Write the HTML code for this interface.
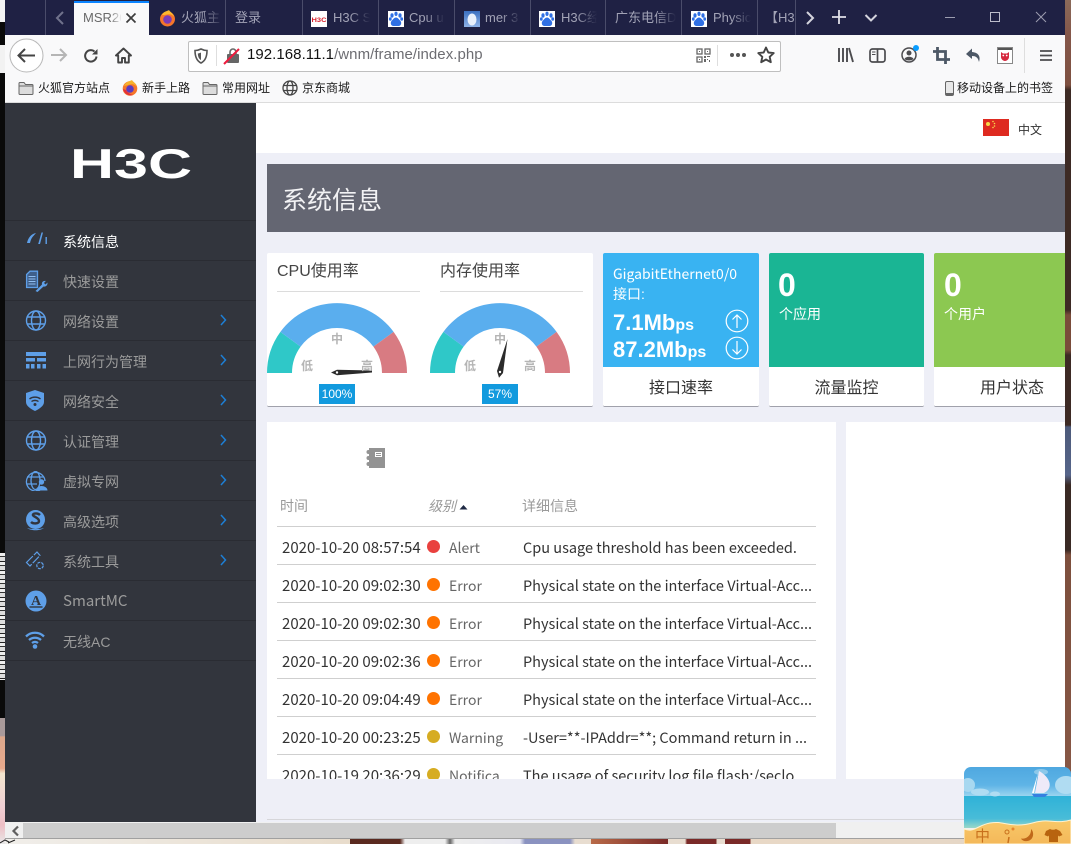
<!DOCTYPE html>
<html><head><meta charset="utf-8"><style>
html,body{margin:0;padding:0;width:1071px;height:844px;overflow:hidden;background:#e8ddd0}
body{position:relative;font-family:"Liberation Sans","Noto Sans CJK SC",sans-serif}
.a{position:absolute}
.t{position:absolute;white-space:nowrap;line-height:20px}
.tab{position:absolute;top:0;height:35px;width:1px;background:#4a4c6a}
.tt{position:absolute;top:8px;white-space:nowrap;line-height:20px;font-size:13px;color:#a2a3b6;overflow:hidden}
.fade{position:absolute;top:2px;height:33px;background:linear-gradient(90deg,rgba(31,33,68,0),#1f2144 20px)}
.bm{position:absolute;top:78px;font-size:12px;color:#1a1a1a;line-height:20px;white-space:nowrap}
.nl{position:absolute;left:5px;width:251px;height:1px;background:#2a2c33}
.n{position:absolute;left:63px;font-size:14px;color:#9b9b9b;line-height:20px;white-space:nowrap}
.ic{position:absolute;left:25px}
.rl{position:absolute;left:10px;width:539px;height:1px;background:#cfcfcf}
.d{position:absolute;left:160px;width:13px;height:13px;border-radius:50%}
.c1,.c2,.c3{position:absolute;white-space:nowrap;line-height:20px;font-size:15px;font-family:"Noto Sans CJK SC","Liberation Sans",sans-serif}
.c1{left:15px;color:#333}
.c2{left:182px;color:#666;font-size:14px}
.c3{left:256px;color:#333;font-size:14.5px}
</style></head><body>

<!-- background strips -->
<div class="a" style="left:0;top:0;width:5px;height:22px;background:#f4f4f4"></div>
<div class="a" style="left:0;top:22px;width:5px;height:23px;background:#0a0a0a"></div>
<div class="a" style="left:0;top:45px;width:5px;height:28px;background:#f2f2f2"></div>
<div class="a" style="left:0;top:73px;width:5px;height:607px;background:#0a0a0a"></div>
<div class="a" style="left:0;top:553px;width:5px;height:127px;background:repeating-linear-gradient(180deg,#eee 0 3px,#333 3px 4px,#ddd 4px 8px,#222 8px 9px)"></div>
<div class="a" style="left:0;top:680px;width:5px;height:38px;background:#0a0a0a"></div>
<div class="a" style="left:0;top:718px;width:5px;height:126px;background:linear-gradient(180deg,#a99a9a 0,#a99a9a 14%,#dca88c 15%,#e8a98c 40%,#f3e6cf 44%,#f0d0d4 70%,#eebfc5 85%,#e8e8e8 100%)"></div>
<div class="a" style="left:1065px;top:0;width:6px;height:844px;background:linear-gradient(180deg,#8a6a5a 0,#85574a 35px,#7d5040 85px,#3d2a24 90px,#3d2a24 310px,#7a4c3a 315px,#7a4c3a 350px,#3d2a24 355px,#3d2a24 425px,#4d5a7a 427px,#56658a 475px,#3a2a24 485px,#3a2a24 550px,#7d4f3d 555px,#8a5a48 844px)"></div>
<!-- bottom wallpaper -->
<div class="a" style="left:5px;top:838px;width:1060px;height:6px;background:linear-gradient(90deg,#f0eeea 0,#e8dccb 345px,#5a2a20 345px,#5a2a20 395px,#eee 400px,#eee 440px,#666 445px,#eee 450px,#e8e8f0 515px,#8a92c0 520px,#8a92c0 565px,#e8ddd0 570px,#e8ddd0 586px,#b86a48 586px,#7a2a28 663px,#e8ddd0 663px,#e8ddd0 680px,#7a2a28 682px,#7a2a28 711px,#e8ddd0 712px,#e8ddd0 720px,#7a2a28 720px,#7a2a28 745px,#e8d8c6 746px,#e4d6c6 100%)"></div>
<div class="a" style="left:5px;top:838px;width:1060px;height:1px;background:#a0a0a0"></div>
<svg class="a" style="left:0;top:838px" width="25" height="6"><path d="M0 5l5-3 4 2M8 5l7-3" stroke="#222" stroke-width="1" fill="none"/></svg>

<!-- tab bar -->
<div class="a" style="left:5px;top:0;width:1060px;height:35px;background:#1f2144"></div>
<div class="tab" style="left:45px"></div>
<div class="tab" style="left:225px"></div>
<div class="tab" style="left:302px"></div>
<div class="tab" style="left:378px"></div>
<div class="tab" style="left:454px"></div>
<div class="tab" style="left:530px"></div>
<div class="tab" style="left:605px"></div>
<div class="tab" style="left:681px"></div>
<div class="tab" style="left:757px"></div>
<div class="tab" style="left:795px"></div>
<svg class="a" style="left:53px;top:10px" width="14" height="16"><path d="M10 2L4 8l6 6" fill="none" stroke="#70728c" stroke-width="2"/></svg>
<div class="a" style="left:74px;top:1px;width:75px;height:34px;background:#f9f9fa"></div>
<div class="a" style="left:74px;top:1px;width:75px;height:2px;background:#0a84ff"></div>
<div class="tt" style="left:83px;color:#6a6a6a;width:38px">MSR26</div>
<div class="a" style="left:110px;top:3px;width:12px;height:32px;background:linear-gradient(90deg,rgba(249,249,250,0),#f9f9fa)"></div>
<svg class="a" style="left:125px;top:12px" width="12" height="12"><path d="M1.500 1.500l9 9M10.500 1.500l-9 9" stroke="#3c3c3c" stroke-width="1.700"/></svg>

<svg class="a" style="left:159px;top:10px" width="17" height="17"><circle cx="8.500" cy="9" r="7.500" fill="#f5762a"/><circle cx="8.500" cy="9.500" r="4.300" fill="#7a3bb8"/><path d="M3 5C5 1 9 1 10 0c1 2 4 3 5 7-2-3-5-3-7-2.500C6 5 4 5 3 5z" fill="#fcb82e"/></svg>
<div class="tt" style="left:181px">火狐主</div><div class="fade" style="left:203px;width:22px"></div>
<div class="tt" style="left:235px">登录</div>
<svg class="a" style="left:311px;top:11px" width="16" height="16"><rect width="16" height="16" fill="#fff"/><text x="8" y="11" font-size="6.500" font-weight="700" fill="#d8202c" text-anchor="middle" font-family="Liberation Sans" textLength="15" lengthAdjust="spacingAndGlyphs">H3C</text></svg>
<div class="tt" style="left:333px">H3C S</div><div class="fade" style="left:350px;width:28px"></div>
<svg class="a" style="left:388px;top:11px" width="16" height="16"><rect width="16" height="16" fill="#fff"/><g fill="#2f6fe4"><ellipse cx="4" cy="4.500" rx="1.600" ry="2.200"/><ellipse cx="8" cy="2.800" rx="1.600" ry="2.200"/><ellipse cx="12" cy="4.500" rx="1.600" ry="2.200"/><ellipse cx="2.300" cy="8" rx="1.400" ry="1.800"/><ellipse cx="13.700" cy="8" rx="1.400" ry="1.800"/><path d="M8 6.500c2 0 3 2 4.500 3.500 1.500 2 .5 5-2 5H5.500c-2.500 0-3.500-3-2-5C5 8.500 6 6.500 8 6.500z"/></g></svg>
<div class="tt" style="left:409px">Cpu u</div><div class="fade" style="left:425px;width:29px"></div>
<svg class="a" style="left:464px;top:11px" width="16" height="16"><defs><linearGradient id="mg" x1="0" y1="0" x2="0" y2="1"><stop offset="0" stop-color="#3a6fc0"/><stop offset="1" stop-color="#8fb3e8"/></linearGradient></defs><rect width="16" height="16" fill="url(#mg)"/><ellipse cx="8" cy="8.500" rx="4.500" ry="6" fill="#e9f0fb"/></svg>
<div class="tt" style="left:485px">mer 3</div><div class="fade" style="left:501px;width:29px"></div>
<svg class="a" style="left:539px;top:11px" width="16" height="16"><rect width="16" height="16" fill="#fff"/><g fill="#2f6fe4"><ellipse cx="4" cy="4.500" rx="1.600" ry="2.200"/><ellipse cx="8" cy="2.800" rx="1.600" ry="2.200"/><ellipse cx="12" cy="4.500" rx="1.600" ry="2.200"/><ellipse cx="2.300" cy="8" rx="1.400" ry="1.800"/><ellipse cx="13.700" cy="8" rx="1.400" ry="1.800"/><path d="M8 6.500c2 0 3 2 4.500 3.500 1.500 2 .5 5-2 5H5.500c-2.500 0-3.500-3-2-5C5 8.500 6 6.500 8 6.500z"/></g></svg>
<div class="tt" style="left:561px">H3C经</div><div class="fade" style="left:577px;width:28px"></div>
<div class="tt" style="left:615px">广东电信D</div><div class="fade" style="left:656px;width:25px"></div>
<svg class="a" style="left:691px;top:11px" width="16" height="16"><rect width="16" height="16" fill="#fff"/><g fill="#2f6fe4"><ellipse cx="4" cy="4.500" rx="1.600" ry="2.200"/><ellipse cx="8" cy="2.800" rx="1.600" ry="2.200"/><ellipse cx="12" cy="4.500" rx="1.600" ry="2.200"/><ellipse cx="2.300" cy="8" rx="1.400" ry="1.800"/><ellipse cx="13.700" cy="8" rx="1.400" ry="1.800"/><path d="M8 6.500c2 0 3 2 4.500 3.500 1.500 2 .5 5-2 5H5.500c-2.500 0-3.500-3-2-5C5 8.500 6 6.500 8 6.500z"/></g></svg>
<div class="tt" style="left:713px">Physic</div><div class="fade" style="left:731px;width:26px"></div>
<div class="tt" style="left:765px;width:30px">【H3</div>
<svg class="a" style="left:803px;top:10px" width="14" height="16"><path d="M4 2l6 6-6 6" fill="none" stroke="#d4d4dd" stroke-width="2"/></svg>
<svg class="a" style="left:831px;top:9px" width="16" height="16"><path d="M8 1v14M1 8h14" stroke="#e0e0e8" stroke-width="1.800"/></svg>
<svg class="a" style="left:864px;top:11px" width="14" height="14"><path d="M1.500 4l5.500 5.500L12.500 4" fill="none" stroke="#d4d4dd" stroke-width="2"/></svg>
<svg class="a" style="left:944px;top:11px" width="12" height="12"><path d="M1 6.500h10" stroke="#9c9db0"/></svg>
<svg class="a" style="left:989px;top:11px" width="12" height="12"><rect x="1.500" y="1.500" width="9" height="9" fill="none" stroke="#bcbdcb"/></svg>
<svg class="a" style="left:1035px;top:11px" width="12" height="12"><path d="M1 1l10 10M11 1L1 11" stroke="#9c9db0"/></svg>

<!-- toolbar -->
<div class="a" style="left:5px;top:35px;width:1060px;height:68px;background:#f9f9fa"></div>
<div class="a" style="left:5px;top:102px;width:1060px;height:1px;background:#dcdcdc"></div>
<svg class="a" style="left:9px;top:38px" width="35" height="35"><circle cx="17.500" cy="17.500" r="16.500" fill="#fff" stroke="#b8b8b8"/><path d="M26 17.500H10M16 11l-6.500 6.500L16 24" fill="none" stroke="#444" stroke-width="2"/></svg>
<svg class="a" style="left:50px;top:46px" width="18" height="18"><path d="M1 9h15M10 3l6 6-6 6" fill="none" stroke="#b5b5b5" stroke-width="2"/></svg>
<svg class="a" style="left:83px;top:48px" width="16" height="16"><path d="M13.500 8.500A5.700 5.700 0 1 1 11.500 3.500" fill="none" stroke="#444" stroke-width="2"/><path d="M14.500 1v5.500H9z" fill="#444"/></svg>
<svg class="a" style="left:115px;top:47px" width="17" height="17"><path d="M8.500 1.500L1 8.500h2.200V15.500h3.800v-4.500h3v4.500h3.800V8.500H16z" fill="none" stroke="#444" stroke-width="1.900" stroke-linejoin="round"/></svg>
<div class="a" style="left:187.500px;top:40.500px;width:591px;height:29px;background:#fff;border:1px solid #bfbfbf;border-radius:2px"></div>
<svg class="a" style="left:194px;top:48px" width="14" height="16"><path d="M7 1c2 1 4 1.500 6 1.500C13 9 11 13 7 15 3 13 1 9 1 2.500 3 2.500 5 2 7 1z" fill="none" stroke="#555" stroke-width="1.600"/><path d="M7 4.500v7.500C5 11 4 9 3.800 5.500 5 5.300 6 5 7 4.500z" fill="#555"/></svg>
<div class="a" style="left:216px;top:45px;width:1px;height:21px;background:#dedede"></div>
<svg class="a" style="left:223px;top:47px" width="18" height="18"><rect x="4" y="7" width="12" height="9" rx="1" fill="#666"/><path d="M7 7V5a3 3 0 0 1 6 0v2" fill="none" stroke="#666" stroke-width="1.600"/><path d="M1 17L16 2" stroke="#ee1c3e" stroke-width="2"/></svg>
<div class="t" style="left:247px;top:44.500px;font-size:15px;color:#6d6d72;letter-spacing:.05px"><span style="color:#111">192.168.11.1</span>/wnm/frame/index.php</div>
<svg class="a" style="left:696px;top:48px" width="15" height="15"><g fill="none" stroke="#666" stroke-width="1.300"><rect x="1" y="1" width="5" height="5"/><rect x="9" y="1" width="5" height="5"/><rect x="1" y="9" width="5" height="5"/></g><path d="M3 3h1v1H3zM11 3h1v1h-1zM3 11h1v1H3zM8 8h2v2H8zM11 8h3v1h-3zM8 11h2v3H8zM11 11h1v1h-1zM13 12h1v2h-1z" fill="#666"/></svg>
<div class="a" style="left:717px;top:45px;width:1px;height:21px;background:#dedede"></div>
<svg class="a" style="left:729px;top:52px" width="18" height="6"><g fill="#555"><circle cx="3" cy="3" r="2"/><circle cx="9" cy="3" r="2"/><circle cx="15" cy="3" r="2"/></g></svg>
<svg class="a" style="left:757px;top:46px" width="18" height="18"><path d="M9 1.500l2.300 5 5.400.600-4 3.700 1.100 5.400L9 13.500l-4.800 2.700 1.100-5.400-4-3.700 5.400-.600z" fill="none" stroke="#444" stroke-width="1.900" stroke-linejoin="round"/></svg>
<svg class="a" style="left:837px;top:47px" width="17" height="16"><path d="M2 1v14M6 1v14M10 1v14M12 1l4 14" stroke="#4c4c4f" stroke-width="1.900" fill="none"/></svg>
<svg class="a" style="left:869px;top:48px" width="17" height="15"><rect x="1" y="1" width="15" height="13" rx="2.500" fill="none" stroke="#4c4c4f" stroke-width="1.700"/><path d="M8.500 1v13" stroke="#4c4c4f" stroke-width="1.700"/><path d="M3 4h3.500M3 6.500h3.500" stroke="#4c4c4f"/></svg>
<svg class="a" style="left:900px;top:44px" width="20" height="20"><circle cx="9" cy="11" r="7" fill="none" stroke="#4c4c4f" stroke-width="1.500"/><circle cx="9" cy="9" r="2.500" fill="#4c4c4f"/><path d="M4.500 15c1-3 8-3 9 0-2 2-7 2-9 0z" fill="#4c4c4f"/><circle cx="16" cy="4" r="3" fill="#0a9dff"/></svg>
<svg class="a" style="left:933px;top:47px" width="17" height="17"><path d="M4.500 0v12.500H17M0 4.500h12.500V17" fill="none" stroke="#4d5866" stroke-width="2.800"/></svg>
<svg class="a" style="left:965px;top:47px" width="17" height="17"><path d="M7 1.500L1 7l6 5V9c4 0 6 1.500 7 6 2-6-1-9.500-7-10z" fill="#4d5866"/></svg>
<svg class="a" style="left:997px;top:47px" width="16" height="17"><rect x=".5" y=".5" width="15" height="16" fill="#fff" stroke="#888"/><rect x="1" y="1" width="14" height="2" fill="#555"/><path d="M4 5l2 1.500h4L12 5v5c0 2-2 4-4 4s-4-2-4-4z" fill="#d6283e"/><circle cx="6.300" cy="8.500" r=".9" fill="#fff"/><circle cx="9.700" cy="8.500" r=".9" fill="#fff"/></svg>
<div class="a" style="left:1024px;top:38px;width:1px;height:35px;background:#dedede"></div>
<svg class="a" style="left:1039px;top:49px" width="14" height="13"><path d="M1 2h12M1 6.500h12M1 11h12" stroke="#4c4c4f" stroke-width="1.800"/></svg>

<!-- bookmarks -->
<svg class="a" style="left:18px;top:81px" width="16" height="14"><path d="M1 12.500V2.500c0-.7.400-1 1-1h4l1.500 2H14c.7 0 1 .4 1 1v8c0 .7-.3 1-1 1H2c-.6 0-1-.3-1-1z" fill="#dcdcdc" stroke="#666"/><path d="M1 5h14" stroke="#666"/></svg>
<div class="bm" style="left:38px">火狐官方站点</div>
<svg class="a" style="left:122px;top:80px" width="16" height="16"><circle cx="8" cy="8.500" r="7.300" fill="#f5762a"/><circle cx="8" cy="9" r="3.800" fill="#5b3bc0"/><path d="M2 6C4 1 9 1 10 0c1 2 4 3 5 7-2-3-5-3-7-2.500z" fill="#f7b22b"/><path d="M1 9c1 5 6 7 10 6-4-1-6-3-7-5z" fill="#e3303a"/></svg>
<div class="bm" style="left:142px">新手上路</div>
<svg class="a" style="left:202px;top:81px" width="16" height="14"><path d="M1 12.500V2.500c0-.7.400-1 1-1h4l1.500 2H14c.7 0 1 .4 1 1v8c0 .7-.3 1-1 1H2c-.6 0-1-.3-1-1z" fill="#dcdcdc" stroke="#666"/><path d="M1 5h14" stroke="#666"/></svg>
<div class="bm" style="left:222px">常用网址</div>
<svg class="a" style="left:282px;top:80px" width="16" height="16"><g fill="none" stroke="#444" stroke-width="1.300"><circle cx="8" cy="8" r="7"/><ellipse cx="8" cy="8" rx="3" ry="7"/><path d="M1.500 5.500h13M1.500 10.500h13"/></g></svg>
<div class="bm" style="left:302px">京东商城</div>
<svg class="a" style="left:945px;top:81px" width="9" height="15"><rect x=".5" y=".5" width="8" height="14" rx="1.500" fill="#e8e8e8" stroke="#666"/><rect x="1" y="12" width="7" height="2" fill="#666"/></svg>
<div class="bm" style="left:957px">移动设备上的书签</div>

<!-- sidebar -->
<div class="a" style="left:5px;top:103px;width:251px;height:719px;background:#32353d"></div>
<svg class="a" style="left:65px;top:143px" width="132" height="40"><text x="5" y="35" font-family="Liberation Sans" font-weight="700" font-size="42" fill="#fff" textLength="122" lengthAdjust="spacingAndGlyphs">H3C</text></svg>
<div class="nl" style="top:220px"></div><div class="nl" style="top:260px"></div><div class="nl" style="top:300px"></div><div class="nl" style="top:340px"></div><div class="nl" style="top:380px"></div><div class="nl" style="top:420px"></div><div class="nl" style="top:460px"></div><div class="nl" style="top:500px"></div><div class="nl" style="top:540px"></div><div class="nl" style="top:580px"></div><div class="nl" style="top:620px"></div><div class="nl" style="top:660px"></div>
<div class="n" style="top:231.500px;color:#fff">系统信息</div>
<div class="n" style="top:271.500px">快速设置</div>
<div class="n" style="top:311.500px">网络设置</div>
<div class="n" style="top:351.500px">上网行为管理</div>
<div class="n" style="top:391.500px">网络安全</div>
<div class="n" style="top:431.500px">认证管理</div>
<div class="n" style="top:471.500px">虚拟专网</div>
<div class="n" style="top:511.500px">高级选项</div>
<div class="n" style="top:551.500px">系统工具</div>
<div class="n" style="top:591px;font-size:15px;font-family:'Noto Sans CJK SC',sans-serif">SmartMC</div>
<div class="n" style="top:631.500px">无线AC</div>
<!-- chevrons -->
<svg class="a" style="left:219px;top:314px" width="8" height="12"><path d="M2 1l4.500 5L2 11" fill="none" stroke="#1d7fd6" stroke-width="1.500"/></svg>
<svg class="a" style="left:219px;top:354px" width="8" height="12"><path d="M2 1l4.500 5L2 11" fill="none" stroke="#1d7fd6" stroke-width="1.500"/></svg>
<svg class="a" style="left:219px;top:394px" width="8" height="12"><path d="M2 1l4.500 5L2 11" fill="none" stroke="#1d7fd6" stroke-width="1.500"/></svg>
<svg class="a" style="left:219px;top:434px" width="8" height="12"><path d="M2 1l4.500 5L2 11" fill="none" stroke="#1d7fd6" stroke-width="1.500"/></svg>
<svg class="a" style="left:219px;top:474px" width="8" height="12"><path d="M2 1l4.500 5L2 11" fill="none" stroke="#1d7fd6" stroke-width="1.500"/></svg>
<svg class="a" style="left:219px;top:514px" width="8" height="12"><path d="M2 1l4.500 5L2 11" fill="none" stroke="#1d7fd6" stroke-width="1.500"/></svg>
<svg class="a" style="left:219px;top:554px" width="8" height="12"><path d="M2 1l4.500 5L2 11" fill="none" stroke="#1d7fd6" stroke-width="1.500"/></svg>
<!-- side icons -->
<svg class="ic" style="top:230px" width="24" height="16"><g fill="#5e9fe8"><path d="M2 13C3 8 6 4 11 3L7.500 7C6 9 5.500 11 5 13z"/><path d="M16.500 2.500h1.500L15 14h-1.800z"/><rect x="20.500" y="7" width="1.400" height="7"/></g></svg>
<svg class="ic" style="top:270px" width="24" height="22"><path d="M1.600 4.500L5 1.200h7.500V17.500H1.600z" fill="#3f5f8a" stroke="#5e9fe8" stroke-width="1.300"/><path d="M3.500 6.500h7M3.500 9h7M3.500 11.500h7M3.500 14h7" stroke="#8fbdf0" stroke-width="1"/><path d="M10.500 21l6.500-6.500c-.5-2 1-4 3.800-3.500L19 13l1.500 1.500L22.500 12.500c.300 3-2 4.500-4 4L12.500 22z" fill="#5e9fe8"/></svg>
<svg class="ic" style="top:310px" width="22" height="21"><g fill="none" stroke="#5e9fe8" stroke-width="1.400"><circle cx="11" cy="10.500" r="9.500"/><ellipse cx="11" cy="10.500" rx="4.500" ry="9.500"/><path d="M2.500 7h17M2.500 14h17"/></g></svg>
<svg class="ic" style="top:352px" width="22" height="17"><g fill="#5e9fe8"><rect x="1" y="0" width="20" height="4"/><rect x="1" y="6" width="9" height="3.500"/><rect x="12" y="6" width="9" height="3.500"/><rect x="1" y="12" width="3.500" height="4.500"/><rect x="6" y="12" width="3.500" height="4.500"/><rect x="12" y="12" width="3.500" height="4.500"/><rect x="17.500" y="12" width="3.500" height="4.500"/></g></svg>
<svg class="ic" style="top:390px" width="20" height="21"><path d="M1 3l9-3 9 3v9c0 4-5 7-9 9-4-2-9-5-9-9z" fill="#5e9fe8"/><g fill="none" stroke="#32353d" stroke-width="1.400"><path d="M4.500 9c3-2.500 8-2.500 11 0M6.500 11.500c2-1.500 5-1.500 7 0"/></g><circle cx="10" cy="14.500" r="1.500" fill="#32353d"/></svg>
<svg class="ic" style="top:430px" width="22" height="21"><g fill="none" stroke="#5e9fe8" stroke-width="1.400"><circle cx="11" cy="10.500" r="9.500"/><ellipse cx="11" cy="10.500" rx="4.500" ry="9.500"/><path d="M2.500 7h17M2.500 14h17"/></g></svg>
<svg class="ic" style="top:471px" width="23" height="20"><g fill="none" stroke="#5e9fe8" stroke-width="1.300"><path d="M15 19a9.300 9.300 0 1 1 5-9"/><ellipse cx="10.500" cy="9.500" rx="4.500" ry="9"/><path d="M2 6h17M2 13h10"/></g><circle cx="16.500" cy="11" r="2.700" fill="#5e9fe8"/><path d="M11 19.500c0-3 3-4.500 5.500-4.500s6 1.500 6 4.500z" fill="#5e9fe8"/></svg>
<svg class="ic" style="top:510px" width="21" height="21"><circle cx="10.500" cy="9.500" r="9.500" fill="#5e9fe8"/><path d="M15 5c-2-2-6-2-7-.5-1 2 6 3 6 6.500 0 3-6 3-8 1" fill="none" stroke="#32353d" stroke-width="2.400"/><path d="M2 18c4 3 13 3 17 0-5 1.500-12 1.500-17 0z" fill="#5e9fe8"/></svg>
<svg class="ic" style="top:550px" width="20" height="20"><g fill="none" stroke="#5e9fe8" stroke-width="1.200" stroke-dasharray="9 1.500"><path d="M1.500 12.500L12 2l3 3.500L5 16z"/><circle cx="15" cy="15.500" r="3.200" stroke-dasharray="3 1"/></g></svg>
<svg class="ic" style="top:590px" width="22" height="22"><circle cx="11" cy="11" r="10.500" fill="#5e9fe8"/><text x="11" y="15" text-anchor="middle" font-family="Liberation Serif" font-size="14" font-weight="700" fill="#32353d">A</text><path d="M4.500 17h13" stroke="#32353d" stroke-width="1.400"/></svg>
<svg class="ic" style="top:631px" width="20" height="18"><g fill="none" stroke="#5e9fe8" stroke-width="2.300"><path d="M1 5.500c5-5 13-5 18 0M4 9c3.500-3 8.500-3 12 0M7 12c2-1.500 4-1.500 6 0"/></g><circle cx="10" cy="15.500" r="2.300" fill="#5e9fe8"/></svg>

<!-- main -->
<div class="a" style="left:256px;top:103px;width:809px;height:719px;background:#eeeff7"></div>
<div class="a" style="left:256px;top:103px;width:809px;height:50px;background:#fff"></div>
<svg class="a" style="left:983px;top:119px" width="26" height="17"><rect width="26" height="17" fill="#de2a20"/><g fill="#f6d84a"><circle cx="5" cy="5" r="2"/><circle cx="10" cy="2.500" r=".8"/><circle cx="11.500" cy="4.500" r=".8"/><circle cx="11.500" cy="7" r=".8"/><circle cx="10" cy="8.500" r=".8"/></g></svg>
<div class="t" style="left:1018px;top:120px;font-size:12px;color:#333">中文</div>
<div class="a" style="left:267px;top:164px;width:798px;height:68px;background:#646672"></div>
<div class="t" style="left:282px;top:186px;font-size:25px;line-height:30px;color:#f2f2f4">系统信息</div>

<!-- gauge card -->
<div class="a" style="left:267px;top:253px;width:326px;height:153px;background:#fff;border-bottom:1px solid #a0a1ab;border-radius:2px"></div>
<div class="t" style="left:277px;top:262px;font-size:16px;color:#444">CPU使用率</div>
<div class="a" style="left:277px;top:291px;width:143px;height:1px;background:#dcdcdc"></div>
<div class="t" style="left:440px;top:262px;font-size:16px;color:#444">内存使用率</div>
<div class="a" style="left:440px;top:291px;width:143px;height:1px;background:#dcdcdc"></div>

<svg class="a" style="left:262px;top:295px" width="320" height="110">
<path d="M5 78A70 70 0 0 1 18.400 36.900L38.600 51.600A45 45 0 0 0 30 78z" fill="#2fc8c8"/>
<path d="M18.400 36.900A70 70 0 0 1 131.600 36.900L111.400 51.600A45 45 0 0 0 38.600 51.600z" fill="#5aaeee"/>
<path d="M131.600 36.900A70 70 0 0 1 145 78H120A45 45 0 0 0 111.400 51.600z" fill="#d87b82"/>
<g transform="translate(163,0)">
<path d="M5 78A70 70 0 0 1 18.400 36.900L38.600 51.600A45 45 0 0 0 30 78z" fill="#2fc8c8"/>
<path d="M18.400 36.900A70 70 0 0 1 131.600 36.900L111.400 51.600A45 45 0 0 0 38.600 51.600z" fill="#5aaeee"/>
<path d="M131.600 36.900A70 70 0 0 1 145 78H120A45 45 0 0 0 111.400 51.600z" fill="#d87b82"/>
</g>
<path d="M69 77.500L75 74.800L110 75.500V77.500L75 80.300z" fill="#2b2b2b"/><circle cx="75" cy="77.500" r="1.200" fill="#fff"/>
<path d="M245.500 44L241 78L237 82.700L235 76z" fill="#2b2b2b"/><circle cx="238" cy="77" r="1.200" fill="#fff"/>
</svg>
<div class="t" style="left:331px;top:329px;font-size:12px;color:#b5b5b5;font-weight:700">中</div>
<div class="t" style="left:301px;top:356px;font-size:12px;color:#b5b5b5;font-weight:700">低</div>
<div class="t" style="left:361px;top:356px;font-size:12px;color:#b5b5b5;font-weight:700">高</div>
<div class="t" style="left:494px;top:329px;font-size:12px;color:#b5b5b5;font-weight:700">中</div>
<div class="t" style="left:464px;top:356px;font-size:12px;color:#b5b5b5;font-weight:700">低</div>
<div class="t" style="left:524px;top:356px;font-size:12px;color:#b5b5b5;font-weight:700">高</div>
<div class="t" style="left:319px;top:384px;width:36px;text-align:center;background:#129ade;color:#fff;font-size:12px">100%</div>
<div class="t" style="left:482px;top:384px;width:36px;text-align:center;background:#129ade;color:#fff;font-size:12px">57%</div>

<!-- stat cards -->
<div class="a" style="left:603px;top:253px;width:156px;height:153px;background:#fff;border-bottom:1px solid #a0a1ab;border-radius:2px"></div>
<div class="a" style="left:603px;top:253px;width:156px;height:114px;background:#39b3f2;border-radius:2px 2px 0 0"></div>
<div class="a" style="left:769px;top:253px;width:155px;height:153px;background:#fff;border-bottom:1px solid #a0a1ab;border-radius:2px"></div>
<div class="a" style="left:769px;top:253px;width:155px;height:114px;background:#1ab594;border-radius:2px 2px 0 0"></div>
<div class="a" style="left:934px;top:253px;width:131px;height:153px;background:#fff;border-bottom:1px solid #a0a1ab;border-radius:2px 0 0 2px"></div>
<div class="a" style="left:934px;top:253px;width:131px;height:114px;background:#8cc851;border-radius:2px 0 0 0"></div>
<div class="t" style="left:613px;top:264px;font-size:14px;color:#fff;font-family:'Noto Sans CJK SC',sans-serif">GigabitEthernet0/0</div>
<div class="t" style="left:613px;top:284px;font-size:14px;color:#fff">接口:</div>
<div class="t" style="left:613px;top:311.500px;font-size:22px;line-height:22px;font-weight:700;color:#fff">7.1Mb<span style="font-size:16px">ps</span></div>
<div class="t" style="left:613px;top:338.500px;font-size:22px;line-height:22px;font-weight:700;color:#fff">87.2Mb<span style="font-size:16px">ps</span></div>
<svg class="a" style="left:725px;top:309px" width="24" height="24"><circle cx="12" cy="12" r="10.800" fill="none" stroke="#fff" stroke-width="1.200"/><path d="M12 19V6M7.500 10.500L12 6l4.500 4.500" fill="none" stroke="#fff" stroke-width="1.200"/></svg>
<svg class="a" style="left:725px;top:336px" width="24" height="24"><circle cx="12" cy="12" r="10.800" fill="none" stroke="#fff" stroke-width="1.200"/><path d="M12 5v13M7.500 13.500L12 18l4.500-4.500" fill="none" stroke="#fff" stroke-width="1.200"/></svg>
<div class="t" style="left:603px;top:378.500px;width:156px;text-align:center;font-size:16px;color:#333">接口速率</div>
<div class="t" style="left:769px;top:378.500px;width:155px;text-align:center;font-size:16px;color:#333">流量监控</div>
<div class="t" style="left:980px;top:378.500px;font-size:16px;color:#333">用户状态</div>
<div class="t" style="left:778px;top:265px;font-size:32px;line-height:40px;font-weight:700;color:#fff">0</div>
<div class="t" style="left:779px;top:304px;font-size:14px;color:#fff">个应用</div>
<div class="t" style="left:944px;top:265px;font-size:32px;line-height:40px;font-weight:700;color:#fff">0</div>
<div class="t" style="left:944px;top:304px;font-size:14px;color:#fff">个用户</div>

<!-- log panel -->
<div class="a" style="left:846px;top:422px;width:219px;height:357px;background:#fff"></div>
<div class="a" style="left:267px;top:422px;width:569px;height:357px;background:#fff;overflow:hidden">
<svg class="a" style="left:99px;top:26px" width="20" height="20"><rect x="3" y="0" width="16" height="20" fill="#939393"/><rect x="9" y="4" width="7" height="5" fill="#fff"/><path d="M10 5.500h5M10 7.500h5" stroke="#939393"/><g fill="#939393"><circle cx="2.500" cy="4" r="2"/><circle cx="2.500" cy="10" r="2"/><circle cx="2.500" cy="16" r="2"/></g></svg>
<div class="t" style="left:13px;top:74px;font-size:14px;color:#9a9a9a">时间</div>
<div class="t" style="left:161px;top:74px;font-size:14px;color:#9a9a9a;font-style:italic">级别</div>
<svg class="a" style="left:192px;top:82px" width="9" height="6"><path d="M.5 5.500L4.500 1l4 4.500z" fill="#1f2a44"/></svg>
<div class="t" style="left:255px;top:74px;font-size:14px;color:#9a9a9a">详细信息</div>
<div class="rl" style="top:104px"></div><div class="rl" style="top:142px"></div><div class="rl" style="top:180px"></div><div class="rl" style="top:218px"></div><div class="rl" style="top:256px"></div><div class="rl" style="top:294px"></div><div class="rl" style="top:332px"></div>

<div class="c1" style="top:116px">2020-10-20 08:57:54</div><div class="d" style="top:118px;background:#e9413e"></div><div class="c2" style="top:116px">Alert</div><div class="c3" style="top:116px">Cpu usage threshold has been exceeded.</div>
<div class="c1" style="top:154px">2020-10-20 09:02:30</div><div class="d" style="top:156px;background:#ff7300"></div><div class="c2" style="top:154px">Error</div><div class="c3" style="top:154px">Physical state on the interface Virtual-Acc...</div>
<div class="c1" style="top:192px">2020-10-20 09:02:30</div><div class="d" style="top:194px;background:#ff7300"></div><div class="c2" style="top:192px">Error</div><div class="c3" style="top:192px">Physical state on the interface Virtual-Acc...</div>
<div class="c1" style="top:230px">2020-10-20 09:02:36</div><div class="d" style="top:232px;background:#ff7300"></div><div class="c2" style="top:230px">Error</div><div class="c3" style="top:230px">Physical state on the interface Virtual-Acc...</div>
<div class="c1" style="top:268px">2020-10-20 09:04:49</div><div class="d" style="top:270px;background:#ff7300"></div><div class="c2" style="top:268px">Error</div><div class="c3" style="top:268px">Physical state on the interface Virtual-Acc...</div>
<div class="c1" style="top:306px">2020-10-20 00:23:25</div><div class="d" style="top:308px;background:#d6ac22"></div><div class="c2" style="top:306px">Warning</div><div class="c3" style="top:306px">-User=**-IPAddr=**; Command return in ...</div>
<div class="c1" style="top:344px">2020-10-19 20:36:29</div><div class="d" style="top:346px;background:#d6ac22"></div><div class="c2" style="top:344px">Notifica</div><div class="c3" style="top:344px">The usage of security log file flash:/seclo...</div>
</div>
<div class="a" style="left:267px;top:819px;width:798px;height:1px;background:#d6d6da"></div>

<!-- scrollbar -->
<div class="a" style="left:5px;top:822px;width:1060px;height:16px;background:#f0f0f0"></div>
<div class="a" style="left:23px;top:823px;width:813px;height:15px;background:#cdcdcd"></div>
<svg class="a" style="left:10px;top:825px" width="12" height="12"><path d="M8 1.500L3.500 6 8 10.500" fill="none" stroke="#606060" stroke-width="2.200"/></svg>

<!-- IME skin widget -->
<svg class="a" style="left:964px;top:767px" width="107" height="77">
<defs>
<linearGradient id="sky" x1="0" y1="0" x2="0" y2="1"><stop offset="0" stop-color="#4fa8e0"/><stop offset=".6" stop-color="#5eb4e6"/><stop offset="1" stop-color="#a0d8f0"/></linearGradient>
<linearGradient id="sea" x1="0" y1="0" x2="0" y2="1"><stop offset="0" stop-color="#2fb2d8"/><stop offset=".7" stop-color="#48bcd8"/><stop offset="1" stop-color="#9ad8c8"/></linearGradient>
<linearGradient id="sand" x1="0" y1="0" x2="0" y2="1"><stop offset="0" stop-color="#f8c868"/><stop offset="1" stop-color="#f4b85a"/></linearGradient>
<clipPath id="wc"><path d="M7 0H100a7 7 0 0 1 7 7V77H0V7a7 7 0 0 1 7-7z"/></clipPath>
</defs>
<g clip-path="url(#wc)">
<rect width="107" height="30" fill="url(#sky)"/>
<rect y="29" width="107" height="32" fill="url(#sea)"/>
<ellipse cx="4" cy="18" rx="7" ry="7" fill="#a8d8f0"/><ellipse cx="16" cy="25" rx="9" ry="3.500" fill="#b0dcf2"/><ellipse cx="31" cy="27" rx="5" ry="2.500" fill="#b0dcf2"/>
<ellipse cx="102" cy="18" rx="11" ry="9" fill="#b0dcf2"/><ellipse cx="77" cy="5" rx="7" ry="3" fill="#8cc8ea"/>
<path d="M75 4C86 10 90 21 80 26H71z" fill="#eeeaf8"/><path d="M74 6L70 26H68z" fill="#fff"/>
<path d="M68 27H84L81 30H70z" fill="#3680e0"/>
<path d="M0 62C10 66 14 58 26 56s14 2 28 2 18-5 30-4 16 1 23-1V77H0z" fill="url(#sand)" stroke="#fff3d2" stroke-width="1"/>
<text x="11" y="74" font-size="15" font-family="Liberation Sans,Noto Sans CJK SC,sans-serif" fill="#c8701c">中</text>
<path d="M45 70l-1 6" stroke="#c8701c" stroke-width="1.500" fill="none"/><circle cx="43" cy="65" r="2" fill="none" stroke="#c8701c"/><circle cx="49" cy="62" r="1.500" fill="#e8842c"/>
<path d="M67 62c3.500 3 3 11-3.500 12-3 .5-5.500-.5-6.500-2.500 5 1 10.500-3 10-9.500z" fill="#c0691a"/>
<path d="M82 64l4-2c2 1 4 1 6 0l4 2 2.500 4-3.500 1.500-1-1V75H85V68.500l-1 1-3.500-1.500z" fill="#b8640f"/>
</g>
</svg>

</body></html>
